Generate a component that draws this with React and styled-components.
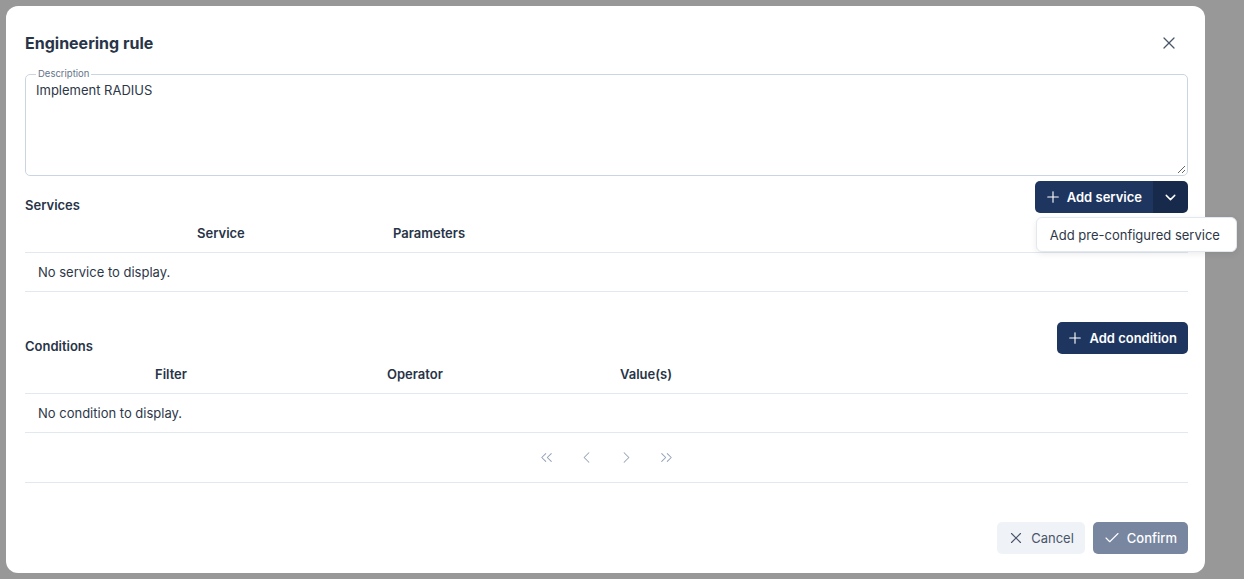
import React from "react";
import styled, { createGlobalStyle } from "styled-components";
import {
  Plus,
  ChevronDown,
  X,
  Check,
  ChevronsLeft,
  ChevronLeft,
  ChevronRight,
  ChevronsRight
} from "lucide-react";

const GlobalStyle = createGlobalStyle`
  html, body {
    margin: 0;
    padding: 0;
    background: #989898;
  }
  body {
    font-family: Inter, "Open Sans", sans-serif;
    color: #2d3748;
  }
  * { box-sizing: border-box; }
`;

const Overlay = styled.div`
  height: 579px;
  padding: 6px 39px 6px 6px;
`;

const Modal = styled.div`
  background: #fff;
  border-radius: 12px;
  height: 100%;
  padding: 0 17px 19px 19px;
  display: flex;
  flex-direction: column;
`;

const Header = styled.div`
  display: flex;
  align-items: center;
  justify-content: space-between;
  height: 62px;
  padding-top: 11px;

  h2 {
    margin: 0;
    font-size: 16px;
    font-weight: 700;
    color: #283447;
  }
`;

const CloseButton = styled.button`
  border: none;
  background: none;
  padding: 0;
  margin-right: 9px;
  color: #4a5568;
  display: flex;
  cursor: pointer;
`;

const Field = styled.fieldset`
  margin: 0;
  padding: 0 1px 1px 10px;
  border: 1px solid #cbd5e1;
  border-radius: 5px;
  min-width: 0;

  legend {
    font-size: 9.5px;
    line-height: 12px;
    color: #64748b;
    padding: 0 2px;
  }

  textarea {
    display: block;
    width: 100%;
    height: 92px;
    margin-top: 2px;
    border: none;
    outline: none;
    padding: 0;
    font-family: inherit;
    font-size: 13px;
    line-height: 16px;
    color: #2d3748;
    resize: vertical;
  }
`;

const SectionHead = styled.div`
  display: flex;
  justify-content: space-between;
  align-items: flex-end;
  margin-top: ${p => p.$top}px;

  h3 {
    margin: 0;
    font-size: 13px;
    line-height: 16px;
    font-weight: 600;
    color: #283447;
  }
`;

const NavyButton = styled.button`
  display: flex;
  align-items: center;
  gap: 5px;
  height: 32px;
  padding: 0 11px 0 9px;
  border: none;
  border-radius: 5px;
  background: #1e3560;
  color: #fff;
  font-family: inherit;
  font-size: 13px;
  font-weight: 600;
  cursor: pointer;
`;

const SplitGroup = styled.div`
  position: relative;
  display: flex;

  ${NavyButton} {
    border-radius: 5px 0 0 5px;
  }
`;

const SplitToggle = styled.button`
  width: 35px;
  height: 32px;
  border: none;
  border-radius: 0 5px 5px 0;
  background: #172a4b;
  color: #fff;
  display: flex;
  align-items: center;
  justify-content: center;
  cursor: pointer;
`;

const Menu = styled.div`
  position: absolute;
  top: calc(100% + 4px);
  left: 1px;
  width: 201px;
  height: 35px;
  background: #fff;
  border: 1px solid #e2e8f0;
  border-radius: 6px;
  box-shadow: 0 2px 6px rgba(0, 0, 0, 0.08);
  display: flex;
  align-items: center;
  padding-left: 13px;
  font-size: 13px;
  color: #2d3748;
  white-space: nowrap;
  z-index: 2;
`;

const Row = styled.div`
  display: grid;
  grid-template-columns: ${p => p.$cols};
  align-items: center;
  height: ${p => p.$h}px;
  border-bottom: 1px solid #e2e8f0;
  font-size: 13px;
`;

const HeadCell = styled.div`
  font-weight: 600;
  color: #283447;
`;

const EmptyCell = styled.div`
  grid-column: 1 / -1;
  padding-left: 13px;
  color: #2d3748;
`;

const Pager = styled.div`
  display: flex;
  justify-content: center;
  align-items: center;
  height: 50px;
  border-bottom: 1px solid #e2e8f0;
`;

const PageButton = styled.button`
  width: 40px;
  height: 30px;
  border: none;
  background: none;
  color: #94a3b8;
  display: flex;
  align-items: center;
  justify-content: center;
`;

const Footer = styled.div`
  margin-top: auto;
  display: flex;
  justify-content: flex-end;
  gap: 8px;
`;

const FooterButton = styled.button`
  display: flex;
  align-items: center;
  gap: 6px;
  height: 32px;
  padding: 0 11px 0 10px;
  border: none;
  border-radius: 5px;
  font-family: inherit;
  font-size: 13px;
  background: ${p => (p.$primary ? "#7886a0" : "#eff3f8")};
  color: ${p => (p.$primary ? "#fff" : "#4a5568")};
  font-weight: ${p => (p.$primary ? 500 : 400)};
`;

const Table = ({ cols, headers, empty }) => (
  <div>
    <Row $cols={cols} $h={40}>
      <div />
      {headers.map(h => (
        <HeadCell key={h}>{h}</HeadCell>
      ))}
    </Row>
    <Row $cols={cols} $h={39}>
      <EmptyCell>{empty}</EmptyCell>
    </Row>
  </div>
);

export default function App() {
  return (
    <>
      <GlobalStyle />
      <Overlay>
        <Modal>
          <Header>
            <h2>Engineering rule</h2>
            <CloseButton>
              <X size={20} strokeWidth={1.5} />
            </CloseButton>
          </Header>

          <Field>
            <legend>Description</legend>
            <textarea defaultValue="Implement RADIUS" />
          </Field>

          <SectionHead $top={5}>
            <h3>Services</h3>
            <SplitGroup>
              <NavyButton>
                <Plus size={18} strokeWidth={1.5} />
                Add service
              </NavyButton>
              <SplitToggle>
                <ChevronDown size={17} strokeWidth={2} />
              </SplitToggle>
              <Menu>Add pre-configured service</Menu>
            </SplitGroup>
          </SectionHead>
          <Table
            cols="172px 196px 1fr"
            headers={["Service", "Parameters"]}
            empty="No service to display."
          />

          <SectionHead $top={30}>
            <h3>Conditions</h3>
            <NavyButton>
              <Plus size={18} strokeWidth={1.5} />
              Add condition
            </NavyButton>
          </SectionHead>
          <div>
            <Table
              cols="130px 232px 233px 1fr"
              headers={["Filter", "Operator", "Value(s)"]}
              empty="No condition to display."
            />
            <Pager>
              <PageButton><ChevronsLeft size={19} strokeWidth={1.3} /></PageButton>
              <PageButton><ChevronLeft size={19} strokeWidth={1.3} /></PageButton>
              <PageButton><ChevronRight size={19} strokeWidth={1.3} /></PageButton>
              <PageButton><ChevronsRight size={19} strokeWidth={1.3} /></PageButton>
            </Pager>
          </div>

          <Footer>
            <FooterButton>
              <X size={18} strokeWidth={1.5} />
              Cancel
            </FooterButton>
            <FooterButton $primary>
              <Check size={18} strokeWidth={1.5} />
              Confirm
            </FooterButton>
          </Footer>
        </Modal>
      </Overlay>
    </>
  );
}
